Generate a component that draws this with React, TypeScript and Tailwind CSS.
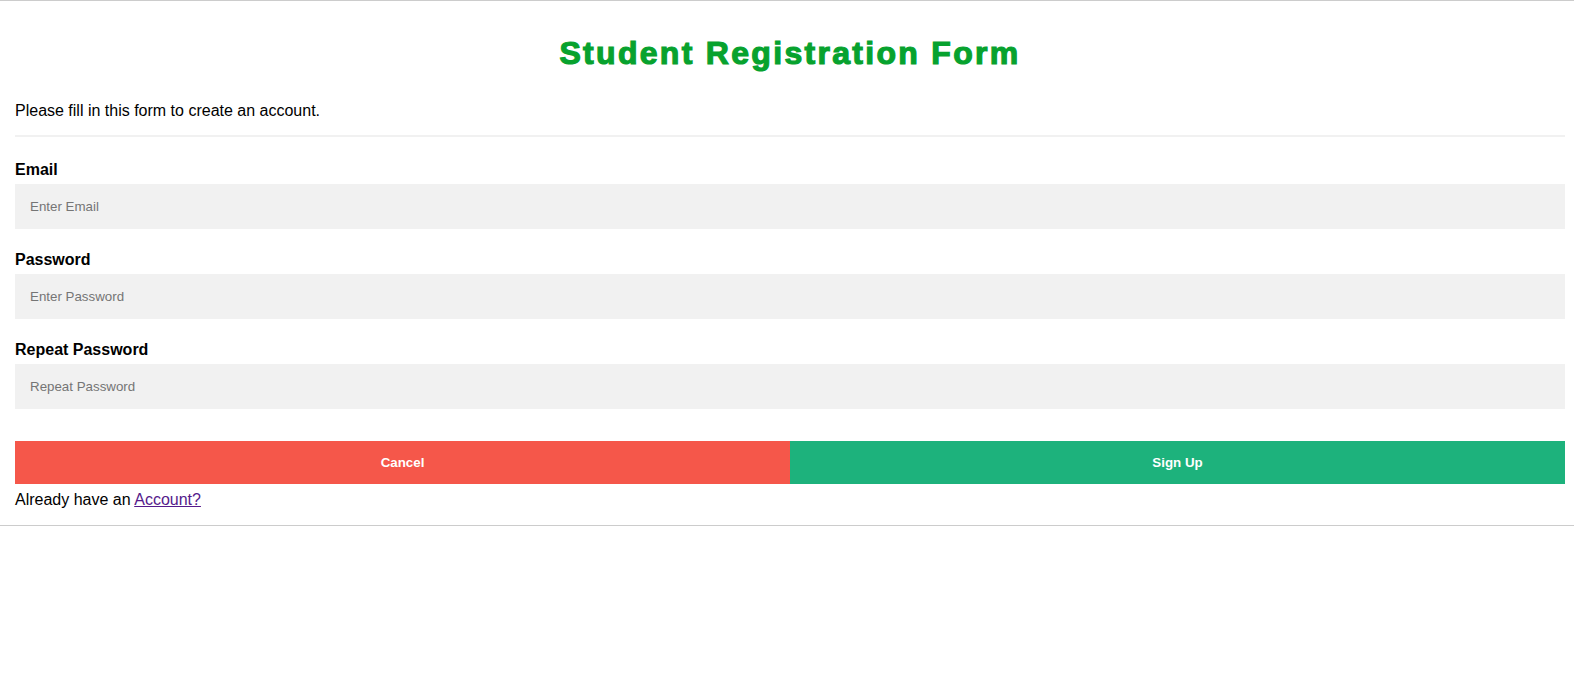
export default function App() {
  return (
    <div className="min-h-screen bg-white font-['Liberation_Sans',Arial,sans-serif] text-black">
      <div className="border-y border-[#ccc] pl-[15px] pr-[9px] pt-[34px] pb-[16px]">
        <h1 className="text-center text-[32px] leading-[37px] font-bold tracking-[2.3px] text-[#07a22e] [-webkit-text-stroke:1.2px_#07a22e]">
          Student Registration Form
        </h1>
        <p className="mt-[30px] text-[16px] leading-[18px]">Please fill in this form to create an account.</p>
        <div className="mt-[15px] mb-[24px] h-[2px] bg-[#f1f1f1]" />

        <label className="block text-[16px] leading-[18px] font-bold">Email</label>
        <input
          type="text"
          placeholder="Enter Email"
          className="mt-[5px] mb-[22px] block h-[45px] w-full bg-[#f1f1f1] px-[15px] text-[13.33px] outline-none placeholder:text-[#757575]"
        />

        <label className="block text-[16px] leading-[18px] font-bold">Password</label>
        <input
          type="password"
          placeholder="Enter Password"
          className="mt-[5px] mb-[22px] block h-[45px] w-full bg-[#f1f1f1] px-[15px] text-[13.33px] outline-none placeholder:text-[#757575]"
        />

        <label className="block text-[16px] leading-[18px] font-bold">Repeat Password</label>
        <input
          type="password"
          placeholder="Repeat Password"
          className="mt-[5px] block h-[45px] w-full bg-[#f1f1f1] px-[15px] text-[13.33px] outline-none placeholder:text-[#757575]"
        />

        <div className="mt-[32px] flex">
          <button className="h-[43px] w-1/2 bg-[#f5574a] text-[13.33px] font-bold text-white">Cancel</button>
          <button className="h-[43px] w-1/2 bg-[#1db27c] text-[13.33px] font-bold text-white">Sign Up</button>
        </div>

        <p className="mt-[7px] text-[16px] leading-[18px]">
          Already have an{" "}
          <a href="#" className="text-[#551a8b] underline">
            Account?
          </a>
        </p>
      </div>
    </div>
  );
}
